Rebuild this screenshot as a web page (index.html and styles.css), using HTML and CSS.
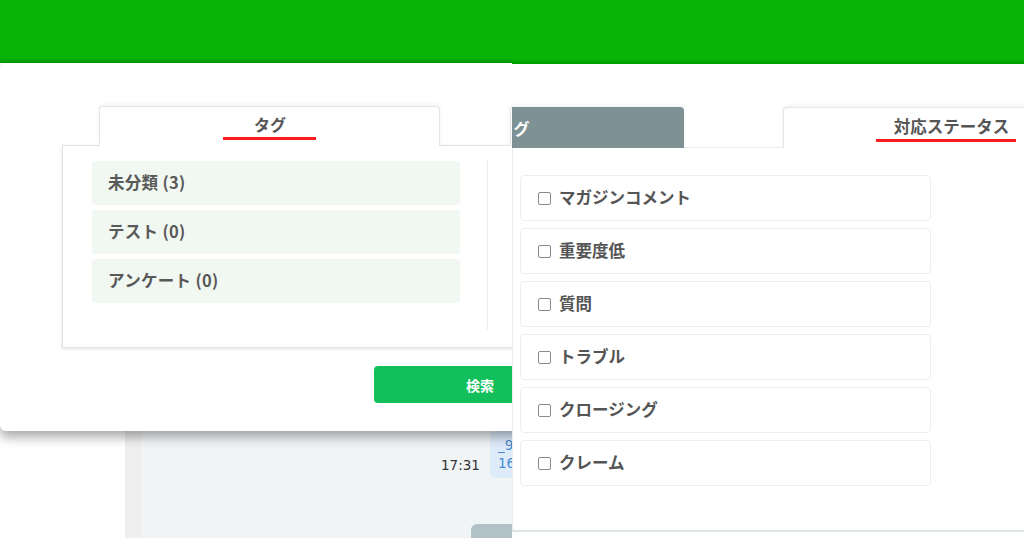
FILE: index.html
```html
<!DOCTYPE html>
<html lang="ja">
<head>
    <meta charset="UTF-8">
    <title>タグ / 対応ステータス</title>
    <link rel="stylesheet" href="styles.css">
</head>
<body>
    <div class="shot">
        <!-- 左: タグ絞り込みモーダル -->
        <section class="pane">
            <header class="topbar"></header>
            <div class="backdrop">
                <div class="sidebar"></div>
                <div class="stripe"></div>
                <div class="chat">
                    <div class="chat-row">
                        <span class="chat-time">17:31</span>
                        <div class="bubble">
                            <span class="bubble-link">_9</span>
                            <span>16</span>
                        </div>
                    </div>
                    <div class="chat-row chat-row-next">
                        <div class="bubble bubble-gray"></div>
                    </div>
                </div>
            </div>

            <div class="modal">
                <div class="tabs tabs-left">
                    <div class="tab"><span class="tab-label">タグ</span></div>
                    <div class="tab"></div>
                </div>
                <div class="tab-body">
                    <div class="tag-col">
                        <div class="tag-item">未分類 (3)</div>
                        <div class="tag-item">テスト (0)</div>
                        <div class="tag-item">アンケート (0)</div>
                    </div>
                </div>
                <div class="modal-foot">
                    <button class="btn-search">検索</button>
                </div>
            </div>
        </section>

        <!-- 右: 対応ステータス -->
        <section class="pane">
            <header class="topbar topbar-right"></header>
            <div class="status-page">
                <div class="tabs tabs-right">
                    <div class="tab tab-off">タグ</div>
                    <div class="tab tab-on"><span class="tab-label tab-label-wide">対応ステータス</span></div>
                </div>
                <div class="status-body">
                    <label class="status-item"><input type="checkbox"> マガジンコメント</label>
                    <label class="status-item"><input type="checkbox"> 重要度低</label>
                    <label class="status-item"><input type="checkbox"> 質問</label>
                    <label class="status-item"><input type="checkbox"> トラブル</label>
                    <label class="status-item"><input type="checkbox"> クロージング</label>
                    <label class="status-item"><input type="checkbox"> クレーム</label>
                </div>
            </div>
        </section>
    </div>
</body>
</html>
```

FILE: styles.css
```css
body {
    margin: 0;
    background: #fff;
    font-family: "Noto Sans CJK JP", "Noto Sans", sans-serif;
    color: #555;
}

.shot {
    display: flex;
    width: 1024px;
    height: 538px;
    overflow: hidden;
}

.pane {
    position: relative;
    width: 512px;
    height: 538px;
    flex: none;
    overflow: hidden;
    background: #fff;
}

.topbar {
    height: 63px;
    background: linear-gradient(#07b407 92%, #019a01);
}

.topbar-right {
    height: 64px;
}

/* モーダルの後ろのチャット画面 */
.backdrop {
    display: flex;
    width: 720px;
    height: 475px;
}

.sidebar {
    width: 125px;
    background: #fff;
}

.stripe {
    width: 16px;
    background: #efefef;
}

.chat {
    flex: 1;
    background: #f1f4f5;
    padding-top: 367px;
}

.chat-row {
    display: flex;
    align-items: flex-end;
    padding-left: 300px;
}

.chat-row-next {
    padding-left: 330px;
    margin-top: 46px;
}

.chat-time {
    font-family: "DejaVu Sans", sans-serif;
    font-size: 13.5px;
    color: #333;
    margin-bottom: 5px;
    margin-right: 10px;
}

.bubble {
    display: flex;
    flex-direction: column;
    background: #deebfa;
    border-radius: 6px;
    padding: 6px 10px 6px 8px;
    width: 160px;
    height: 36px;
    font-family: "DejaVu Sans", sans-serif;
    font-size: 13.5px;
    line-height: 18px;
    color: #4d8bd1;
}

.bubble-gray {
    background: #b2c1c6;
    height: 40px;
}

/* モーダル */
.modal {
    position: absolute;
    top: 63px;
    left: 0;
    width: 620px;
    height: 368px;
    box-sizing: border-box;
    padding: 43px 0 0 62px;
    background: #fff;
    border-radius: 6px;
    box-shadow: 0 6px 12px rgba(0, 0, 0, 0.35);
}

.tabs {
    display: flex;
    position: relative;
    z-index: 1;
}

.tabs-left {
    margin-left: 37px;
    gap: 70px;
}

.tab {
    width: 341px;
    height: 40px;
    flex: none;
    box-sizing: border-box;
    padding-top: 7px;
    text-align: center;
    background: #fff;
    border: 1px solid #e2e6e8;
    border-bottom: none;
    border-radius: 4px 4px 0 0;
    box-shadow: 0 -2px 4px rgba(0, 0, 0, 0.05);
    font-size: 16px;
    line-height: 20px;
    font-weight: bold;
    color: #555;
}

.tab-label {
    display: inline-block;
    padding: 0 30px 3px 31px;
    border-bottom: 3px solid #ff1c1c;
}

.tab-label-wide {
    padding: 0 7px 3px 18px;
}

.tab-body {
    width: 524px;
    height: 203px;
    box-sizing: border-box;
    margin-top: -1px;
    padding: 14px 0 0 29px;
    border: 1px solid #dce4e8;
    box-shadow: 0 1px 3px rgba(0, 0, 0, 0.12);
}

.tag-col {
    width: 396px;
    height: 170px;
    box-sizing: border-box;
    padding: 1px 27px 0 0;
    border-right: 1px solid #ececec;
}

.tag-item {
    height: 44px;
    margin-bottom: 5px;
    padding: 0 0 3px 16px;
    box-sizing: border-box;
    display: flex;
    align-items: center;
    background: #f1f8f1;
    border-radius: 4px;
    font-size: 16.5px;
    letter-spacing: 0.3px;
    font-weight: bold;
    color: #595959;
}

.modal-foot {
    display: flex;
    justify-content: flex-end;
    width: 524px;
    margin-top: 18px;
}

.btn-search {
    width: 212px;
    height: 37px;
    border: none;
    border-radius: 4px;
    background: #13bf5a;
    color: #fff;
    font-family: inherit;
    font-size: 14px;
    font-weight: bold;
}

/* 右側 */
.status-page {
    padding-top: 43px;
}

.tabs-right {
    margin-left: -169px;
    gap: 99px;
}

.tabs-right .tab {
    height: 41px;
}

.tab-off {
    background: #7e9194;
    border-color: #7e9194;
    color: #fff;
    padding-top: 10px;
}

.tab-on {
    padding: 8px 15px 0 0;
    font-size: 16.5px;
}

.status-body {
    width: 620px;
    height: 385px;
    box-sizing: border-box;
    margin-top: -1px;
    padding: 27px 0 0 7px;
    border: 1px solid #e6ebed;
    border-bottom: 2px solid #dde5e8;
}

.status-item {
    display: flex;
    align-items: center;
    width: 411px;
    height: 46px;
    box-sizing: border-box;
    margin-bottom: 7px;
    padding: 0 0 2px 17px;
    border: 1px solid #eceff1;
    border-radius: 4px;
    font-size: 16.5px;
    font-weight: bold;
    color: #555;
}

.status-item input {
    appearance: none;
    width: 13px;
    height: 13px;
    margin: 2px 8px 0 0;
    border: 1px solid #8a8a8a;
    border-radius: 2px;
    background: #fff;
}
```
